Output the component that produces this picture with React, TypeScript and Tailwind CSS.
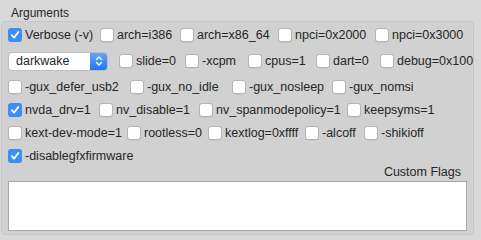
import React from "react";

type Flag = { label: string; checked?: boolean; w?: number };

const rows: { top: string; items: Flag[] }[] = [
  {
    top: "mt-[8px]",
    items: [
      { label: "-gux_defer_usb2", w: 122 },
      { label: "-gux_no_idle", w: 102 },
      { label: "-gux_nosleep", w: 100 },
      { label: "-gux_nomsi" },
    ],
  },
  {
    top: "mt-[5px]",
    items: [
      { label: "nvda_drv=1", checked: true, w: 91 },
      { label: "nv_disable=1", w: 100 },
      { label: "nv_spanmodepolicy=1", w: 148 },
      { label: "keepsyms=1" },
    ],
  },
  {
    top: "mt-[5px]",
    items: [
      { label: "kext-dev-mode=1", w: 119 },
      { label: "rootless=0", w: 81 },
      { label: "kextlog=0xffff", w: 97 },
      { label: "-alcoff", w: 59 },
      { label: "-shikioff" },
    ],
  },
  {
    top: "mt-[5px]",
    items: [{ label: "-disablegfxfirmware", checked: true }],
  },
];

function Check({ label, checked, w }: Flag) {
  return (
    <label className="flex shrink-0 items-center gap-[3px] whitespace-nowrap" style={w ? { width: w } : undefined}>
      {checked ? (
        <span className="flex h-[14px] w-[14px] shrink-0 items-center justify-center rounded-[3px] bg-[#3b8ef5]">
          <svg width="10" height="10" viewBox="0 0 10 10">
            <path d="M1.8 5.2 L4 7.6 L8.4 2" fill="none" stroke="#fff" strokeWidth="1.8" strokeLinecap="round" strokeLinejoin="round" />
          </svg>
        </span>
      ) : (
        <span className="h-[14px] w-[14px] shrink-0 rounded-[3px] border border-[#b4b4b4] bg-white shadow-[0_0.5px_0.5px_rgba(0,0,0,0.1)]" />
      )}
      <span>{label}</span>
    </label>
  );
}

function Popup() {
  return (
    <div className="mr-[11px] flex h-[19px] w-[100px] shrink-0 items-stretch overflow-hidden rounded-[4px] border border-[#bdbdbd] bg-white">
      <span className="flex flex-1 items-center pl-[7px]">darkwake</span>
      <span className="flex w-[17px] items-center justify-center bg-gradient-to-b from-[#5fa7f9] to-[#1f76ee]">
        <svg width="8" height="12" viewBox="0 0 8 12">
          <path d="M1.5 4.5 L4 2 L6.5 4.5 M1.5 7.5 L4 10 L6.5 7.5" fill="none" stroke="#fff" strokeWidth="1.3" strokeLinecap="round" strokeLinejoin="round" />
        </svg>
      </span>
    </div>
  );
}

export default function App() {
  return (
    <div className="h-[240px] w-[481px] bg-[#d8d8d8] pt-[6px] pl-[1px] text-[12px] leading-[14px] text-[#262626] [font-family:'Liberation_Sans',Arial,sans-serif]">
      <div className="mb-[1px] pl-[10px]">Arguments</div>
      <div className="flex h-[214px] w-[473px] flex-col rounded-[4px] border border-[#c6c6c6] bg-[#d1d1d1] px-[6px] pt-[4px] text-[12.5px]">
        <div className="flex h-[18px] items-center">
          <Check label="Verbose (-v)" checked w={92} />
          <Check label="arch=i386" w={80} />
          <Check label="arch=x86_64" w={98} />
          <Check label="npci=0x2000" w={97} />
          <Check label="npci=0x3000" />
        </div>
        <div className="mt-[8px] flex h-[18px] items-center">
          <Popup />
          <Check label="slide=0" w={66} />
          <Check label="-xcpm" w={63} />
          <Check label="cpus=1" w={68} />
          <Check label="dart=0" w={64} />
          <Check label="debug=0x100" />
        </div>
        {rows.map((row, i) => (
          <div key={i} className={`flex h-[18px] items-center ${row.top}`}>
            {row.items.map((f) => (
              <Check key={f.label} {...f} />
            ))}
          </div>
        ))}
        <div className="pr-[6px] text-right">Custom Flags</div>
        <textarea className="mt-[2px] h-[50px] w-[459px] resize-none border border-[#a7a7a7] bg-white outline-none" />
      </div>
    </div>
  );
}
